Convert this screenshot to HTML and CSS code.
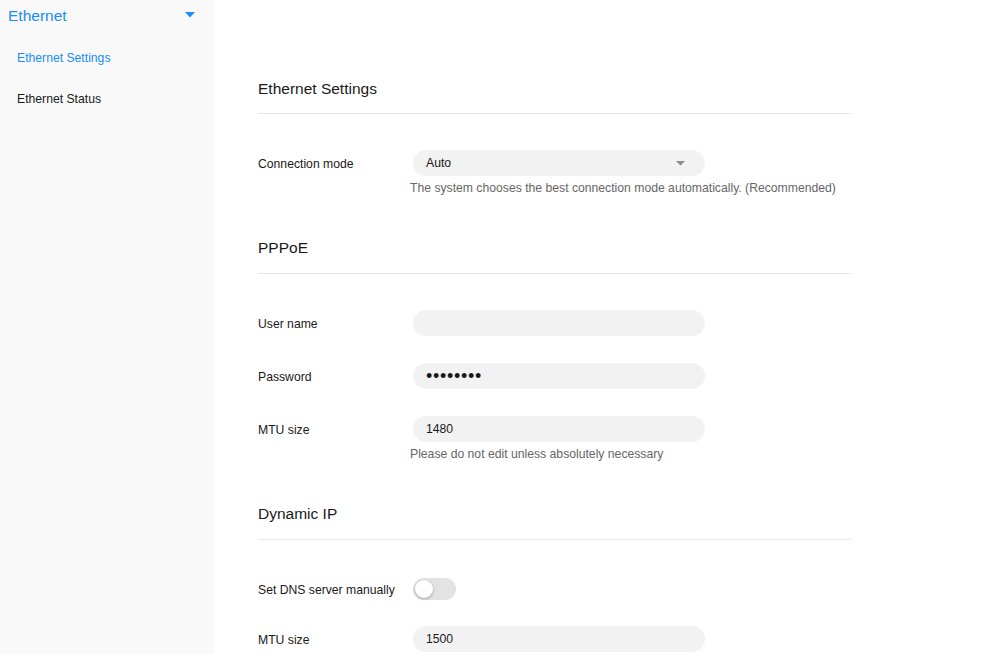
FILE: index.html
```html
<!DOCTYPE html>
<html lang="en">
<head>
<meta charset="utf-8">
<title>Ethernet Settings</title>
<link rel="stylesheet" href="styles.css">
</head>
<body>
<div class="page">
  <aside class="sidebar">
    <div class="menu-head">
      <span class="menu-title">Ethernet</span>
      <svg class="menu-caret" width="10" height="6" viewBox="0 0 10 6"><path d="M0 0H10L5 5.5Z" fill="#1a8cff"/></svg>
    </div>
    <ul class="menu-list">
      <li class="menu-item active">Ethernet Settings</li>
      <li class="menu-item">Ethernet Status</li>
    </ul>
  </aside>
  <main class="content">
    <section class="section">
      <h2 class="section-title">Ethernet Settings</h2>
      <div class="row first">
        <div class="label">Connection mode</div>
        <div class="field select">
          <span>Auto</span>
          <svg class="select-caret" width="9" height="5" viewBox="0 0 9 5"><path d="M0 0H9L4.5 4.5Z" fill="#8c8c8c"/></svg>
        </div>
      </div>
      <div class="hint">The system chooses the best connection mode automatically. (Recommended)</div>
    </section>

    <section class="section">
      <h2 class="section-title">PPPoE</h2>
      <div class="row first">
        <div class="label">User name</div>
        <div class="field"></div>
      </div>
      <div class="row">
        <div class="label">Password</div>
        <div class="field"><span class="dots">••••••••</span></div>
      </div>
      <div class="row">
        <div class="label">MTU size</div>
        <div class="field"><span>1480</span></div>
      </div>
      <div class="hint">Please do not edit unless absolutely necessary</div>
    </section>

    <section class="section">
      <h2 class="section-title">Dynamic IP</h2>
      <div class="row first toggle-row">
        <div class="label">Set DNS server manually</div>
        <div class="toggle"><div class="knob"></div></div>
      </div>
      <div class="row after-toggle">
        <div class="label">MTU size</div>
        <div class="field"><span>1500</span></div>
      </div>
    </section>
  </main>
</div>
</body>
</html>
```

FILE: styles.css
```css
* { box-sizing: border-box; }
html, body {
  margin: 0;
  padding: 0;
  background: #ffffff;
  font-family: "Liberation Sans", Arial, sans-serif;
  color: #191919;
}
.page {
  display: flex;
  width: 1000px;
  height: 654px;
  overflow: hidden;
}
.sidebar {
  width: 214px;
  flex: none;
  background: #f9f9f9;
}
.menu-head {
  height: 32px;
  display: flex;
  align-items: center;
  justify-content: space-between;
  padding: 0 19px 0 8px;
}
.menu-title {
  font-size: 15.5px;
  color: #1a8cff;
}
.menu-caret { display: block; margin-top: -2px; }
.menu-list {
  list-style: none;
  margin: 0;
  padding: 5px 0 0 0;
}
.menu-item {
  height: 41px;
  line-height: 42px;
  padding-left: 17px;
  font-size: 12.2px;
  color: #191919;
}
.menu-item.active { color: #1a8cff; }

.content {
  flex: none;
  width: 593px;
  margin-left: 44px;
  padding-top: 79px;
}
.section + .section { margin-top: 42px; }
.section-title {
  margin: 0;
  font-size: 15.5px;
  font-weight: normal;
  line-height: 20px;
  padding-bottom: 14px;
  border-bottom: 1px solid #e8e8e8;
  color: #191919;
}
.section + .section .section-title { padding-bottom: 15px; }
.row {
  display: flex;
  align-items: center;
  height: 26px;
  margin-top: 27px;
}
.row.first { margin-top: 36px; }
.row.toggle-row { height: 22px; margin-top: 38px; }
.row.after-toggle { margin-top: 26px; }
.label {
  width: 155px;
  flex: none;
  font-size: 12.2px;
  padding-top: 1px;
  color: #191919;
}
.field {
  width: 292px;
  height: 26px;
  border-radius: 13px;
  background: #f2f2f2;
  display: flex;
  align-items: center;
  padding: 0 13px;
  font-size: 12.2px;
  color: #191919;
}
.select { justify-content: space-between; padding-right: 20px; }
.select-caret { display: block; }
.dots {
  font-size: 18px;
  letter-spacing: 0.7px;
  line-height: 1;
  margin-top: -1px;
}
.hint {
  margin-top: 4px;
  margin-left: 152px;
  line-height: 16px;
  font-size: 12.2px;
  color: #666666;
}
.toggle {
  width: 43px;
  height: 22px;
  border-radius: 11px;
  background: #e3e3e3;
  padding: 2px;
}
.knob {
  width: 18px;
  height: 18px;
  border-radius: 50%;
  background: #ffffff;
  box-shadow: 0 1px 3px rgba(0,0,0,0.3);
}
```
